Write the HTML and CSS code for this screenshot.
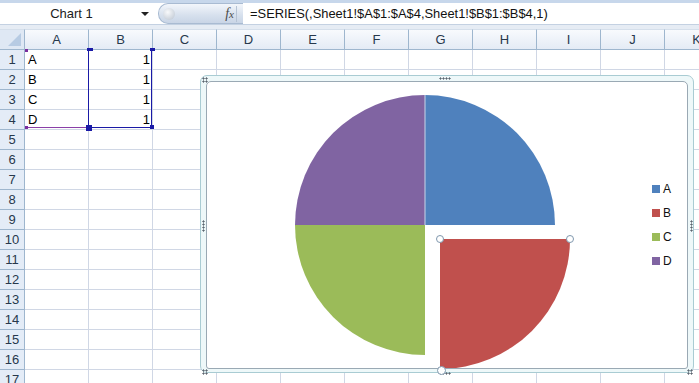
FILE: index.html
```html
<!DOCTYPE html>
<html>
	<head>
		<title>Chart 1</title>
		<link rel="stylesheet" href="styles.css">
	</head>
<body>
<div class="app">

	<!-- formula bar -->
	<div class="formula-bar">
		<div class="name-box">
			<span class="name">Chart 1</span>
			<span class="arrow"></span>
		</div>
		<div class="fx-pill">
			<span class="knob"></span>
			<span class="fx"><i>f</i><i class="sub">x</i></span>
		</div>
		<div class="formula">=SERIES(,Sheet1!$A$1:$A$4,Sheet1!$B$1:$B$4,1)</div>
	</div>
	<div class="bar-gap"></div>

	<!-- sheet -->
	<div class="sheet">
		<table class="grid">
			<tr class="cols">
				<th class="corner"><span class="tri"></span></th>
				<th>A</th><th>B</th><th>C</th><th>D</th><th>E</th><th>F</th><th>G</th><th>H</th><th>I</th><th>J</th><th>K</th>
			</tr>
			<tr><th>1</th><td>A</td><td class="num">1</td><td></td><td></td><td></td><td></td><td></td><td></td><td></td><td></td><td></td></tr>
			<tr><th>2</th><td>B</td><td class="num">1</td><td></td><td></td><td></td><td></td><td></td><td></td><td></td><td></td><td></td></tr>
			<tr><th>3</th><td>C</td><td class="num">1</td><td></td><td></td><td></td><td></td><td></td><td></td><td></td><td></td><td></td></tr>
			<tr><th>4</th><td>D</td><td class="num">1</td><td></td><td></td><td></td><td></td><td></td><td></td><td></td><td></td><td></td></tr>
			<tr><th>5</th><td></td><td></td><td></td><td></td><td></td><td></td><td></td><td></td><td></td><td></td><td></td></tr>
			<tr><th>6</th><td></td><td></td><td></td><td></td><td></td><td></td><td></td><td></td><td></td><td></td><td></td></tr>
			<tr><th>7</th><td></td><td></td><td></td><td></td><td></td><td></td><td></td><td></td><td></td><td></td><td></td></tr>
			<tr><th>8</th><td></td><td></td><td></td><td></td><td></td><td></td><td></td><td></td><td></td><td></td><td></td></tr>
			<tr><th>9</th><td></td><td></td><td></td><td></td><td></td><td></td><td></td><td></td><td></td><td></td><td></td></tr>
			<tr><th>10</th><td></td><td></td><td></td><td></td><td></td><td></td><td></td><td></td><td></td><td></td><td></td></tr>
			<tr><th>11</th><td></td><td></td><td></td><td></td><td></td><td></td><td></td><td></td><td></td><td></td><td></td></tr>
			<tr><th>12</th><td></td><td></td><td></td><td></td><td></td><td></td><td></td><td></td><td></td><td></td><td></td></tr>
			<tr><th>13</th><td></td><td></td><td></td><td></td><td></td><td></td><td></td><td></td><td></td><td></td><td></td></tr>
			<tr><th>14</th><td></td><td></td><td></td><td></td><td></td><td></td><td></td><td></td><td></td><td></td><td></td></tr>
			<tr><th>15</th><td></td><td></td><td></td><td></td><td></td><td></td><td></td><td></td><td></td><td></td><td></td></tr>
			<tr><th>16</th><td></td><td></td><td></td><td></td><td></td><td></td><td></td><td></td><td></td><td></td><td></td></tr>
			<tr><th>17</th><td></td><td></td><td></td><td></td><td></td><td></td><td></td><td></td><td></td><td></td><td></td></tr>
		</table>

		<!-- range highlight for the series -->
		<div class="range-names"></div>
		<div class="range-values"></div>
		<span class="hdl purple h-a1"></span>
		<span class="hdl purple h-a4"></span>
		<span class="hdl blue h-b0"></span>
		<span class="hdl blue h-c0"></span>
		<span class="hdl blue big h-b4"></span>
		<span class="hdl blue h-c4"></span>

		<!-- the chart floats over the cells -->
		<div class="chart">
			<div class="plot">
				<svg class="pie" width="284" height="282" viewBox="0 0 284 282">
					<path d="M135,134 L135,4 A130,130 0 0 1 265,134 Z" fill="#4f81bd" />
					<path d="M135,134 L135,264 A130,130 0 0 1 5,134 Z" fill="#9bbb59" />
					<path d="M135,134 L5,134 A130,130 0 0 1 135,4 Z" fill="#8064a2" />
					<line x1="135" y1="4" x2="135" y2="134" stroke="#c9d6ea" stroke-width="1" />
					<path d="M150,148 L280,148 A130,130 0 0 1 150,278 Z" fill="#c0504d" />
					<circle cx="150" cy="148" r="3.5" fill="#fff" stroke="#7f97ad" />
					<circle cx="280" cy="148" r="3.5" fill="#fff" stroke="#7f97ad" />
				</svg>
				<div class="legend">
					<div class="key"><span class="sw" style="background:#4f81bd"></span>A</div>
					<div class="key"><span class="sw" style="background:#c0504d"></span>B</div>
					<div class="key"><span class="sw" style="background:#9bbb59"></span>C</div>
					<div class="key"><span class="sw" style="background:#8064a2"></span>D</div>
				</div>
			</div>
			<span class="grip g-top"></span>
			<span class="grip g-bottom"></span>
			<span class="grip g-left"></span>
			<span class="grip g-right"></span>
			<span class="grip g-tl"></span>
			<span class="grip g-bl"></span>
			<span class="grip g-br"></span>
			<span class="slice-hdl"></span>
		</div>
	</div>
</div>
</body>
</html>
```

FILE: styles.css
```css
body {
	margin: 0;
	background: #ffffff;
	font-family: "Liberation Sans", Arial, sans-serif;
}

.app {
	width: 699px;
	height: 383px;
	overflow: hidden;
}

/* formula bar */
.formula-bar {
	height: 21px;
	border-top: 3px solid #c7d7eb;
	background: #ffffff;
	display: flex;
	align-items: center;
}

.name-box {
	width: 156px;
	display: flex;
	align-items: center;
}

.name {
	flex: 1;
	text-align: center;
	font-size: 13px;
	color: #1b1b1b;
	padding-left: 2px;
}

.arrow {
	width: 0;
	height: 0;
	border-left: 4px solid transparent;
	border-right: 4px solid transparent;
	border-top: 4px solid #222;
	margin-right: 7px;
	margin-top: 1px;
}

.fx-pill {
	width: 84px;
	height: 19px;
	margin-left: 2px;
	border: 1px solid #a9bbd2;
	border-right: none;
	border-radius: 10px 0 0 10px;
	background: linear-gradient(#f3f6fb, #d6e0ed 60%, #c9d5e6);
	display: flex;
	align-items: center;
	justify-content: space-between;
}

.knob {
	width: 12px;
	height: 12px;
	margin-left: 4px;
	border-radius: 50%;
	background: radial-gradient(circle at 40% 35%, #f8f9fb, #b9c3cf);
}

.fx {
	font-family: "Liberation Serif", serif;
	font-size: 14px;
	color: #4a4a4a;
	margin-right: 6px;
	border-right: 1px solid #b5c3d5;
	padding-right: 2px;
}

.fx .sub {
	font-size: 11px;
}

.formula {
	padding-left: 7px;
	font-size: 12.9px;
	color: #111;
	white-space: nowrap;
}

.bar-gap {
	height: 4px;
	background: #e6ecf4;
	border-top: 1px solid #c4d1e2;
}

/* sheet */
.sheet {
	position: relative;
}

.grid {
	border-collapse: separate;
	border-spacing: 0;
	table-layout: fixed;
	width: 729px;
}

.grid th,
.grid td {
	height: 19px;
	padding: 0;
	border-right: 1px solid #d0d7e5;
	border-bottom: 1px solid #d0d7e5;
	font-size: 13px;
	line-height: 19px;
	overflow: hidden;
	white-space: nowrap;
}

.grid th {
	width: 24px;
	font-weight: normal;
	color: #27384c;
	background: #e4ecf7;
	border-right-color: #9eb6ce;
	border-bottom-color: #9eb6ce;
	text-align: center;
}

.grid td {
	width: 63px;
	padding-left: 3px;
	color: #000;
}

.grid td.num {
	text-align: right;
	padding-left: 0;
	padding-right: 2px;
}

.grid .cols th {
	width: 63px;
	background: linear-gradient(#f8fafd, #e4ebf5);
	border-top: 1px solid #d5dfeb;
	height: 18px;
}

.grid .cols th.corner {
	width: 24px;
	background: #dfe8f4;
	position: relative;
}

.tri {
	position: absolute;
	right: 3px;
	bottom: 3px;
	width: 0;
	height: 0;
	border-left: 13px solid transparent;
	border-bottom: 13px solid #b7cbe3;
}

/* series range highlight */
.range-names {
	position: absolute;
	left: 25px;
	top: 98px;
	width: 64px;
	height: 1px;
	background: #8a3fa8;
}

.range-values {
	position: absolute;
	left: 88px;
	top: 20px;
	width: 62px;
	height: 78px;
	border: 1px solid #1a1aa6;
	border-top: none;
}

.hdl {
	position: absolute;
	width: 4px;
	height: 4px;
}

.hdl.purple { background: #7a2e9e; width: 3px; height: 3px; }
.hdl.blue { background: #1a1aa6; }
.hdl.big { width: 6px; height: 6px; }

.h-a1 { left: 25px; top: 20px; }
.h-a4 { left: 25px; top: 97px; }
.h-b0 { left: 87px; top: 19px; width: 6px; height: 3px; }
.h-c0 { left: 150px; top: 19px; width: 5px; height: 3px; }
.h-b4 { left: 86px; top: 96px; }
.h-c4 { left: 150px; top: 96px; }

/* chart object */
.chart {
	position: absolute;
	left: 200px;
	top: 46px;
	width: 482px;
	height: 286px;
	padding: 5px;
	border: 1px solid #a9ccd3;
	border-radius: 7px;
	background: #eef8f9;
}

.plot {
	height: 286px;
	border: 1px solid #9aa9b4;
	border-radius: 5px 5px 3px 3px;
	background: #ffffff;
	display: flex;
	align-items: center;
	overflow: hidden;
}

.pie {
	align-self: flex-start;
	margin-left: 83px;
	margin-top: 9px;
	flex: none;
}

.legend {
	margin-left: 78px;
	display: flex;
	flex-direction: column;
	gap: 10px;
	font-size: 12px;
	color: #111;
}

.key {
	display: flex;
	align-items: center;
	height: 14px;
}

.sw {
	width: 8px;
	height: 8px;
	margin-right: 3px;
}

/* sizing grips: rows of 2px dots */
.grip {
	position: absolute;
	background-image: radial-gradient(circle, #5c6670 0.9px, transparent 1.2px);
	background-size: 3px 3px;
}

.g-top { left: 238px; top: 1px; width: 12px; height: 3px; }
.g-bottom { left: 238px; top: 296px; width: 12px; height: 3px; }
.g-left { left: 1px; top: 144px; width: 3px; height: 12px; }
.g-right { left: 489px; top: 144px; width: 3px; height: 12px; }
.g-tl { left: 1px; top: 1px; width: 6px; height: 6px; }
.g-bl { left: 1px; top: 293px; width: 6px; height: 6px; }
.g-br { left: 486px; top: 293px; width: 6px; height: 6px; }

.slice-hdl {
	position: absolute;
	left: 236px;
	top: 290px;
	width: 7px;
	height: 7px;
	border: 1px solid #7f97ad;
	border-radius: 50%;
	background: #fff;
}
```
